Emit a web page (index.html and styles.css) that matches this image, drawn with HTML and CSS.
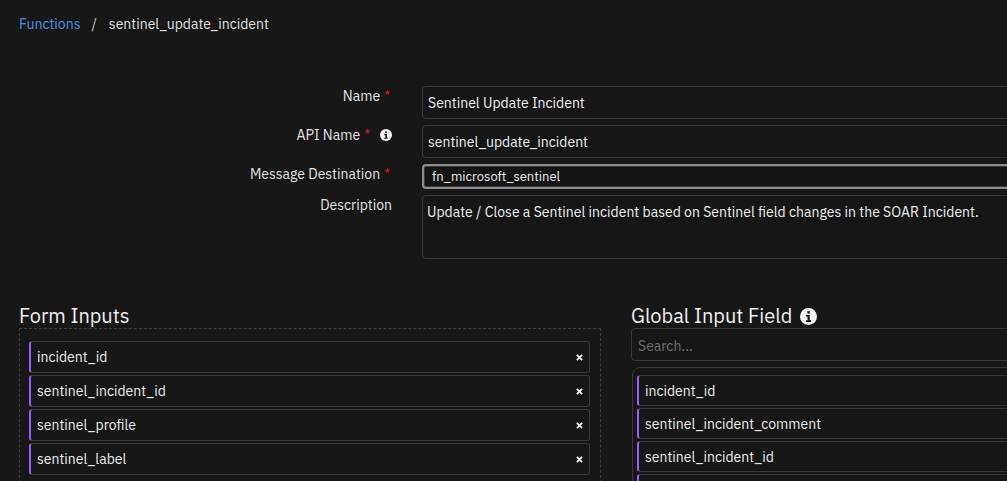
FILE: index.html
```html
<!DOCTYPE html>
<html lang="en">
<head>
<meta charset="utf-8">
<title>sentinel_update_incident</title>
<link rel="stylesheet" href="styles.css">
</head>
<body>
<div class="page">
  <nav class="breadcrumb">
    <a class="crumb-link" href="#">Functions</a>
    <span class="crumb-sep">/</span>
    <span class="crumb-current">sentinel_update_incident</span>
  </nav>

  <div class="details">
    <div class="label">Name <span class="req">*</span></div>
    <div class="field text-input">Sentinel Update Incident</div>

    <div class="label">API Name <span class="req">*</span>
      <svg class="info info-sm" viewBox="0 0 16 16"><circle cx="8" cy="8" r="8" fill="#f4f4f4"/><rect x="7" y="3" width="2.2" height="2.2" fill="#161616"/><path d="M5.8 6.6h3.4v4.9h1.2v1.6H5.8v-1.6h1.3V8.2H5.8z" fill="#161616"/></svg>
    </div>
    <div class="field text-input">sentinel_update_incident</div>

    <div class="label">Message Destination <span class="req">*</span></div>
    <div class="field select-input">fn_microsoft_sentinel</div>

    <div class="label">Description</div>
    <div class="field textarea">Update / Close a Sentinel incident based on Sentinel field changes in the SOAR Incident.</div>
  </div>

  <div class="columns">
    <section class="col">
      <h2 class="col-title">Form Inputs</h2>
      <div class="drop-zone">
        <div class="item">incident_id<svg class="close" viewBox="0 0 8 8"><path d="M1 1L7 7M7 1L1 7" stroke="#f4f4f4" stroke-width="2"/></svg></div>
        <div class="item">sentinel_incident_id<svg class="close" viewBox="0 0 8 8"><path d="M1 1L7 7M7 1L1 7" stroke="#f4f4f4" stroke-width="2"/></svg></div>
        <div class="item">sentinel_profile<svg class="close" viewBox="0 0 8 8"><path d="M1 1L7 7M7 1L1 7" stroke="#f4f4f4" stroke-width="2"/></svg></div>
        <div class="item">sentinel_label<svg class="close" viewBox="0 0 8 8"><path d="M1 1L7 7M7 1L1 7" stroke="#f4f4f4" stroke-width="2"/></svg></div>
      </div>
    </section>
    <section class="col">
      <h2 class="col-title">Global Input Field
        <svg class="info info-lg" viewBox="0 0 16 16"><circle cx="8" cy="8" r="8" fill="#f4f4f4"/><rect x="7" y="3" width="2.2" height="2.2" fill="#161616"/><path d="M5.8 6.6h3.4v4.9h1.2v1.6H5.8v-1.6h1.3V8.2H5.8z" fill="#161616"/></svg>
      </h2>
      <div class="search">Search...</div>
      <div class="list">
        <div class="item gitem">incident_id</div>
        <div class="item gitem">sentinel_incident_comment</div>
        <div class="item gitem">sentinel_incident_id</div>
        <div class="item gitem"></div>
      </div>
    </section>
  </div>
</div>
</body>
</html>
```

FILE: styles.css
```css
html, body {
  margin: 0;
  padding: 0;
  background: #171717;
  overflow: hidden;
}
body {
  font-family: "IBM Plex Sans", Roboto, "Noto Sans", sans-serif;
  color: #e8e8e8;
  font-size: 14px;
  width: 1007px;
  height: 481px;
}
.page {
  padding: 14px 0 0 19px;
  width: 1400px;
}
.breadcrumb {
  display: flex;
  align-items: center;
  height: 20px;
  font-size: 14px;
}
.crumb-link {
  color: #4e8ee8;
  text-decoration: none;
}
.crumb-sep {
  color: #c6c6c6;
  margin: 0 12px 0 11px;
}
.crumb-current {
  color: #e0e0e0;
}
.details {
  margin-top: 52px;
  display: grid;
  grid-template-columns: 373px 700px;
  column-gap: 30px;
  row-gap: 6px;
  align-items: start;
}
.label {
  display: flex;
  justify-content: flex-end;
  align-items: center;
  gap: 4px;
  height: 20px;
  line-height: 20px;
  color: #e4e4e4;
  font-size: 14px;
}
.req {
  color: #da1e28;
  font-size: 13px;
  margin-right: 2px;
}
.info {
  display: block;
}
.info-sm {
  width: 12px;
  height: 12px;
  margin-left: 4px;
}
.info-lg {
  width: 17px;
  height: 17px;
  margin-left: 8px;
}
.field {
  box-sizing: border-box;
  border: 1px solid #393939;
  border-radius: 4px;
  background: #161616;
  color: #f0f0f0;
}
.text-input {
  height: 33px;
  padding: 1px 5px 0;
  display: flex;
  align-items: center;
}
.select-input {
  height: 25px;
  padding: 0 8px;
  display: flex;
  align-items: center;
  font-size: 13px;
  border: 2px solid #8d8d8d;
  box-shadow: inset 0 0 0 1px #3a3a3a;
  background: #141414;
}
.textarea {
  height: 64px;
  padding: 7px 4px;
}
.columns {
  margin-top: 45px;
  display: flex;
  gap: 30px;
}
.col {
  width: 582px;
  flex: none;
}
.col-title {
  margin: 0;
  font-weight: 400;
  font-size: 20px;
  line-height: 24px;
  height: 24px;
  color: #f0f0f0;
  display: flex;
  align-items: center;
}
.drop-zone {
  box-sizing: border-box;
  border: 1px dashed #3d3d3d;
  border-bottom: none;
  padding: 12px 10px 0 9px;
  display: flex;
  flex-direction: column;
  gap: 2px;
  height: 160px;
}
.item {
  box-sizing: border-box;
  height: 32px;
  border: 1px solid #393939;
  border-left: 2px solid #9a5cff;
  border-radius: 3px;
  padding: 0 6px;
  display: flex;
  align-items: center;
  justify-content: space-between;
  color: #ececec;
}
.close {
  width: 7px;
  height: 7px;
  margin-right: 0;
}
.search {
  box-sizing: border-box;
  height: 33px;
  border: 1px solid #393939;
  border-radius: 4px;
  padding: 2px 6px 0;
  display: flex;
  align-items: center;
  color: #6f6f6f;
  width: 600px;
}
.list {
  box-sizing: border-box;
  margin-top: 6px;
  margin-left: 1px;
  border: 1px solid #393939;
  border-radius: 8px;
  padding: 7px 4px 0 4px;
  display: flex;
  flex-direction: column;
  gap: 2px;
  width: 600px;
  height: 140px;
}
.gitem {
  height: 31px;
  flex: none;
}
```
